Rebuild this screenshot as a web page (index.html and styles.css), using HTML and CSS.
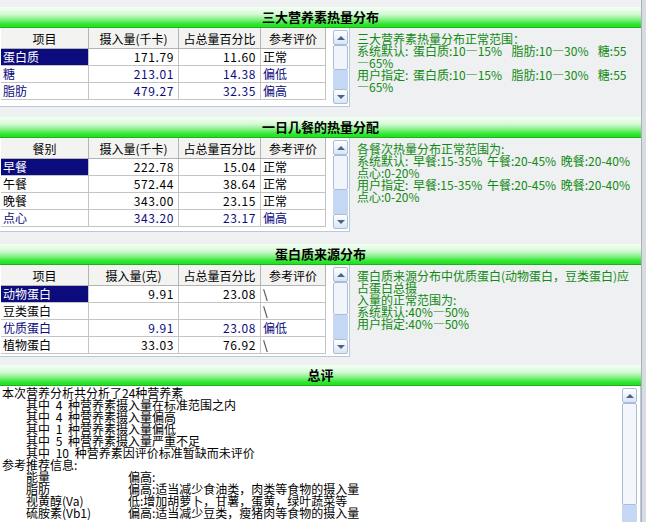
FILE: index.html
```html
<!DOCTYPE html>
<html lang="zh-CN">
<head>
  <meta charset="UTF-8" />
  <title>营养分析</title>
  <link rel="stylesheet" href="styles.css">
</head>
<body>
  <div class="janela">
    <div class="principal">

      <!-- 三大营养素 -->
      <div class="secao s1">
        <div class="barra">三大营养素热量分布</div>
        <div class="corpo">
          <div class="grade">
            <table>
              <colgroup><col class="c1"><col class="c2"><col class="c3"><col class="c4"></colgroup>
              <tr><th>项目</th><th>摄入量(千卡)</th><th>占总量百分比</th><th>参考评价</th></tr>
              <tr><td class="sel">蛋白质</td><td class="num">171.79</td><td class="num">11.60</td><td>正常</td></tr>
              <tr class="azul"><td>糖</td><td class="num">213.01</td><td class="num">14.38</td><td>偏低</td></tr>
              <tr class="azul"><td>脂肪</td><td class="num">479.27</td><td class="num">32.35</td><td>偏高</td></tr>
            </table>
            <div class="rolagem">
              <div class="btn"></div>
              <div class="polegar"></div>
              <div class="trilho"></div>
              <div class="btn baixo"></div>
            </div>
          </div>
          <div class="nota">三大营养素热量分布正常范围：
系统默认: 蛋白质:10—15%  脂肪:10—30%  糖:55
—65%
用户指定: 蛋白质:10—15%  脂肪:10—30%  糖:55
—65%</div>
        </div>
      </div>

      <!-- 一日几餐 -->
      <div class="secao s2">
        <div class="barra">一日几餐的热量分配</div>
        <div class="corpo">
          <div class="grade">
            <table>
              <colgroup><col class="c1"><col class="c2"><col class="c3"><col class="c4"></colgroup>
              <tr><th>餐别</th><th>摄入量(千卡)</th><th>占总量百分比</th><th>参考评价</th></tr>
              <tr><td class="sel">早餐</td><td class="num">222.78</td><td class="num">15.04</td><td>正常</td></tr>
              <tr><td>午餐</td><td class="num">572.44</td><td class="num">38.64</td><td>正常</td></tr>
              <tr><td>晚餐</td><td class="num">343.00</td><td class="num">23.15</td><td>正常</td></tr>
              <tr class="azul"><td>点心</td><td class="num">343.20</td><td class="num">23.17</td><td>偏高</td></tr>
            </table>
            <div class="rolagem">
              <div class="btn"></div>
              <div class="polegar"></div>
              <div class="trilho"></div>
              <div class="btn baixo"></div>
            </div>
          </div>
          <div class="nota">各餐次热量分布正常范围为:
系统默认: 早餐:15-35% 午餐:20-45% 晚餐:20-40%
点心:0-20%
用户指定: 早餐:15-35% 午餐:20-45% 晚餐:20-40%
点心:0-20%</div>
        </div>
      </div>

      <!-- 蛋白质来源 -->
      <div class="secao s3">
        <div class="barra">蛋白质来源分布</div>
        <div class="corpo">
          <div class="grade">
            <table>
              <colgroup><col class="c1"><col class="c2"><col class="c3"><col class="c4"></colgroup>
              <tr><th>项目</th><th>摄入量(克)</th><th>占总量百分比</th><th>参考评价</th></tr>
              <tr><td class="sel">动物蛋白</td><td class="num">9.91</td><td class="num">23.08</td><td>\</td></tr>
              <tr><td>豆类蛋白</td><td class="num"></td><td class="num"></td><td>\</td></tr>
              <tr class="azul"><td>优质蛋白</td><td class="num">9.91</td><td class="num">23.08</td><td>偏低</td></tr>
              <tr><td>植物蛋白</td><td class="num">33.03</td><td class="num">76.92</td><td>\</td></tr>
            </table>
            <div class="rolagem">
              <div class="btn"></div>
              <div class="polegar"></div>
              <div class="trilho"></div>
              <div class="btn baixo"></div>
            </div>
          </div>
          <div class="nota">蛋白质来源分布中优质蛋白(动物蛋白，豆类蛋白)应
占蛋白总摄
入量的正常范围为:
系统默认:40%—50%
用户指定:40%—50%</div>
        </div>
      </div>

      <!-- 总评 -->
      <div class="secao s4">
        <div class="barra">总评</div>
        <div class="corpo">
          <div class="resumo">
            <div class="texto">
              <div>本次营养分析共分析了24种营养素</div>
              <div class="rec">其中 4 种营养素摄入量在标准范围之内</div>
              <div class="rec">其中 4 种营养素摄入量偏高</div>
              <div class="rec">其中 1 种营养素摄入量偏低</div>
              <div class="rec">其中 5 种营养素摄入量严重不足</div>
              <div class="rec">其中 10 种营养素因评价标准暂缺而未评价</div>
              <div>参考推荐信息:</div>
              <div class="item"><span>能量</span><span>偏高:</span></div>
              <div class="item"><span>脂肪</span><span>偏高:适当减少食油类，肉类等食物的摄入量</span></div>
              <div class="item"><span>视黄醇(Va)</span><span>低:增加胡萝卜，甘薯，蛋黄，绿叶蔬菜等</span></div>
              <div class="item"><span>硫胺素(Vb1)</span><span>偏高:适当减少豆类，瘦猪肉等食物的摄入量</span></div>
            </div>
            <div class="rolagem grande">
              <div class="btn"></div>
              <div class="polegar"></div>
              <div class="trilho"></div>
            </div>
          </div>
        </div>
      </div>

    </div>
    <div class="borda"></div>
  </div>
</body>
</html>
```

FILE: styles.css
```css
body {
  margin: 0;
  background-color: #eef0f2;
  font-family: "Noto Sans CJK SC", sans-serif;
  font-size: 12px;
  color: #000;
}

.janela {
  display: flex;
  width: 646px;
  height: 522px;
  overflow: hidden;
}

.principal {
  width: 641px;
}

.borda {
  width: 4px;
  background-color: #d8dce1;
  border-left: 1px solid #a7b0bb;
}

.secao {
  margin-top: 8px;
}

.s1 { margin-top: 7px; }
.s2 { margin-top: 10px; }
.s3 { margin-top: 12px; }
.s4 { margin-top: 8px; }

.barra {
  height: 20px;
  line-height: 20px;
  text-align: center;
  font-size: 13px;
  font-weight: bold;
  background: linear-gradient(#f4fff4 0%, #d6f9d6 35%, #86f086 62%, #2ee82e 85%, #22e022 100%);
  border-bottom: 1px solid #1fae1f;
}

.corpo {
  display: flex;
}

.s1 .corpo { height: 79px; }
.s2 .corpo { height: 94px; }
.s3 .corpo { height: 92px; }
.s4 .corpo { height: 140px; }

.grade {
  width: 350px;
  box-sizing: border-box;
  background-color: #fff;
  border-right: 1px solid #b9c8da;
  border-bottom: 1px solid #b9c8da;
  display: flex;
  justify-content: space-between;
  padding-left: 1px;
}

table {
  table-layout: fixed;
  width: 325px;
  border-collapse: separate;
  border-spacing: 0;
  align-self: flex-start;
}

.c1 { width: 88px; }
.c2 { width: 90px; }
.c3 { width: 82px; }
.c4 { width: 65px; }

th {
  height: 20px;
  padding: 0;
  font-weight: normal;
  background-color: #f3f3f1;
  border-right: 1px solid #b4b4b4;
  border-bottom: 1px solid #b4b4b4;
}

td {
  height: 16px;
  line-height: 16px;
  padding: 0 3px 0 2px;
  white-space: nowrap;
  overflow: hidden;
  border-right: 1px solid #c4c4c4;
  border-bottom: 1px solid #c4c4c4;
}

td.num {
  text-align: right;
  padding-right: 4px;
  letter-spacing: 0.6px;
}

td.sel {
  background-color: #0b0b7c;
  color: #fff;
}

.azul td {
  color: #0b0b80;
}

.rolagem {
  width: 15px;
  margin: 2px 1px 2px 0;
  display: flex;
  flex-direction: column;
}

.btn {
  height: 15px;
  box-sizing: border-box;
  border: 1px solid #a9bdd8;
  border-radius: 2px;
  background: linear-gradient(#ffffff, #d9e5f6);
  display: flex;
  align-items: center;
  justify-content: center;
}

.btn::after {
  content: "";
  border-left: 4px solid transparent;
  border-right: 4px solid transparent;
  border-bottom: 4px solid #4f6387;
}

.btn.baixo::after {
  border-bottom: 0;
  border-top: 4px solid #4f6387;
}

.polegar {
  height: 25px;
  box-sizing: border-box;
  border: 1px solid #a9bdd8;
  border-radius: 2px;
  background-color: #f1f5fb;
}

.s2 .polegar { height: 35px; }
.s3 .polegar { height: 33px; }

.trilho {
  flex: 1;
  background-color: #c5d8f3;
}

.nota {
  flex: 1;
  padding: 5px 0 0 7px;
  color: #128a12;
  line-height: 12px;
  white-space: pre;
  word-spacing: 2px;
}

.resumo {
  flex: 1;
  background-color: #fff;
  border-right: 1px solid #b9c8da;
  display: flex;
  justify-content: space-between;
}

.texto {
  padding: 1px 0 0 2px;
  line-height: 12px;
  white-space: nowrap;
  word-spacing: 3px;
}

.rec {
  padding-left: 24px;
}

.item {
  display: grid;
  grid-template-columns: 102px auto;
  padding-left: 24px;
}

.rolagem.grande {
  margin: 2px 3px 0 0;
}

.grande .polegar {
  height: 102px;
  background-color: #f3f7fc;
}
```
